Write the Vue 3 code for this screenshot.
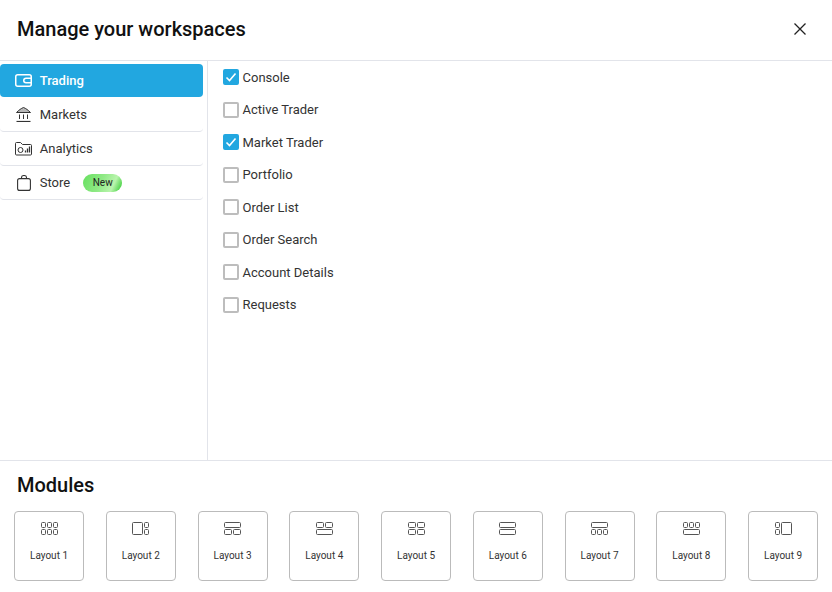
<script setup>
const navItems = [
  { name: 'Trading', icon: 'wallet', active: true },
  { name: 'Markets', icon: 'bank' },
  { name: 'Analytics', icon: 'folder' },
  { name: 'Store', icon: 'bag', badge: 'New' }
]
const options = [
  { name: 'Console', checked: true },
  { name: 'Active Trader', checked: false },
  { name: 'Market Trader', checked: true },
  { name: 'Portfolio', checked: false },
  { name: 'Order List', checked: false },
  { name: 'Order Search', checked: false },
  { name: 'Account Details', checked: false },
  { name: 'Requests', checked: false }
]
// Layout cells as [x, y, w, h] inside a 17x13 icon
const row1 = 0.5
const row2 = 7.5
const layouts = [
  [[0.5,row1,4,5],[6.5,row1,4,5],[12.5,row1,4,5],[0.5,row2,4,5],[6.5,row2,4,5],[12.5,row2,4,5]],
  [[0.5,0.5,10,12],[12.5,row1,4,5],[12.5,row2,4,5]],
  [[0.5,row1,16,5],[0.5,row2,7,5],[9.5,row2,7,5]],
  [[0.5,row1,7,5],[9.5,row1,7,5],[0.5,row2,16,5]],
  [[0.5,row1,7,5],[9.5,row1,7,5],[0.5,row2,7,5],[9.5,row2,7,5]],
  [[0.5,row1,16,5],[0.5,row2,16,5]],
  [[0.5,row1,16,5],[0.5,row2,4,5],[6.5,row2,4,5],[12.5,row2,4,5]],
  [[0.5,row1,4,5],[6.5,row1,4,5],[12.5,row1,4,5],[0.5,row2,16,5]],
  [[0.5,row1,4,5],[0.5,row2,4,5],[6.5,0.5,10,12]]
]
</script>

<template>
  <div class="dialog">
    <header class="head">
      <h1>Manage your workspaces</h1>
      <button class="close" aria-label="Close">
        <svg width="14" height="14" viewBox="0 0 14 14"><path d="M1.5 1.5l11 11M12.5 1.5l-11 11" stroke="#222" stroke-width="1.3" fill="none"/></svg>
      </button>
    </header>
    <div class="main">
      <nav class="side">
        <div v-for="n in navItems" :key="n.name" class="nav" :class="{ active: n.active }">
          <span class="nav-icon">
            <svg v-if="n.icon === 'wallet'" width="17" height="13" viewBox="0 0 17 13" fill="none" stroke="#fff" stroke-width="1.5">
              <rect x="0.75" y="0.75" width="15.5" height="11.5" rx="2"/>
              <path d="M16.25 4.25H11a2.25 2.25 0 0 0 0 4.5h5.25"/>
            </svg>
            <svg v-else-if="n.icon === 'bank'" width="15" height="15" viewBox="0 0 15 15" fill="none" stroke="#333" stroke-width="1">
              <path d="M0.5 5.5C3 3 5 1.5 7.5 0.5c2.5 1 4.5 2.5 7 5z" fill="#333" fill-opacity="0.35"/>
              <path d="M3.5 7.5v4.5M7.5 7.5v4.5M11.5 7.5v4.5"/>
              <path d="M0.5 14.5h14" stroke-width="1.2"/>
            </svg>
            <svg v-else-if="n.icon === 'folder'" width="17" height="14" viewBox="0 0 17 14" fill="none" stroke="#333" stroke-width="1">
              <path d="M0.5 12V1.5a1 1 0 0 1 1-1h4l2 2h8a1 1 0 0 1 1 1V12a1 1 0 0 1-1 1h-14a1 1 0 0 1-1-1z"/>
              <circle cx="5.5" cy="8" r="2.5"/>
              <path d="M10.5 10.5V8.5M12.5 10.5V6.5M14.5 10.5V4.5" stroke-width="1.3"/>
            </svg>
            <svg v-else width="14" height="16" viewBox="0 0 14 16" fill="none" stroke="#333" stroke-width="1.1">
              <rect x="0.6" y="3.6" width="12.8" height="11.8" rx="2"/>
              <path d="M4.5 3.6V2.5a2.5 2 0 0 1 5 0v1.1"/>
            </svg>
          </span>
          <span class="nav-label">{{ n.name }}</span>
          <span v-if="n.badge" class="badge">{{ n.badge }}</span>
        </div>
      </nav>
      <section class="options">
        <label v-for="o in options" :key="o.name" class="opt">
          <span class="box" :class="{ on: o.checked }">
            <svg v-if="o.checked" width="12" height="12" viewBox="0 0 12 12"><path d="M1.5 6.5l3 3 6-7" stroke="#fff" stroke-width="1.6" fill="none"/></svg>
          </span>
          <span>{{ o.name }}</span>
        </label>
      </section>
    </div>
    <footer class="modules">
      <h2>Modules</h2>
      <div class="cards">
        <div v-for="(cells, i) in layouts" :key="i" class="card">
          <svg width="17" height="13" viewBox="0 0 17 13" fill="none" stroke="#555" stroke-width="1">
            <rect v-for="(c, j) in cells" :key="j" :x="c[0]" :y="c[1]" :width="c[2]" :height="c[3]" rx="1"/>
          </svg>
          <span>Layout {{ i + 1 }}</span>
        </div>
      </div>
    </footer>
  </div>
</template>

<style>
html, body { margin: 0; background: #fff; }
</style>

<style scoped>
.dialog {
  width: 832px;
  height: 592px;
  display: flex;
  flex-direction: column;
  font-family: Roboto, "Liberation Sans", sans-serif;
  color: #333;
  background: #fff;
  overflow: hidden;
}
.head {
  height: 58px;
  flex: none;
  display: flex;
  align-items: center;
  justify-content: space-between;
  padding: 0 25px 2px 17px;
  border-bottom: 1px solid #e2e4ea;
}
h1 {
  margin: 0;
  font-size: 20px;
  font-weight: 500;
  color: #111;
}
.close {
  border: 0;
  background: none;
  padding: 0;
  display: flex;
}
.main {
  height: 399px;
  flex: none;
  display: flex;
  border-bottom: 1px solid #e2e4ea;
}
.side {
  width: 207px;
  box-sizing: content-box;
  flex: none;
  border-right: 1px solid #e2e4ea;
  padding-top: 3px;
}
.nav {
  width: 203px;
  height: 34px;
  display: flex;
  align-items: center;
  box-sizing: border-box;
  border-bottom: 1px solid #e2e4ea;
  border-radius: 0 0 4px 4px;
  font-size: 13px;
  color: #333;
}
.nav.active {
  height: 33px;
  margin-bottom: 1px;
  background: #22a7e0;
  color: #fff;
  font-weight: 500;
  border-bottom: 0;
  border-radius: 4px;
}
.nav-icon {
  width: 17px;
  margin-left: 15px;
  margin-right: 8px;
  display: flex;
  justify-content: center;
}
.nav-label {
  margin-left: -0.25px;
}
.badge {
  margin-left: 13px;
  width: 39px;
  height: 18px;
  border-radius: 9px;
  display: flex;
  align-items: center;
  justify-content: center;
  font-size: 10px;
  color: #222;
  background: linear-gradient(115deg, #66e05f 0%, #8fe985 45%, #b9f4ad 75%, #55d650 92%, #8fe985 100%);
}
.options {
  padding: 0 0 0 15px;
}
.opt {
  height: 32.5px;
  display: flex;
  align-items: center;
  font-size: 13px;
  color: #333;
}
.box {
  width: 16px;
  height: 16px;
  box-sizing: border-box;
  border: 2px solid #bdbdbd;
  border-radius: 2px;
  margin-right: 3.5px;
  display: flex;
  align-items: center;
  justify-content: center;
}
.box.on {
  background: #22a7e0;
  border-color: #22a7e0;
}
.modules {
  flex: 1;
  padding: 0 14px;
}
h2 {
  margin: 13px 0 0 3px;
  font-size: 20px;
  line-height: 23px;
  font-weight: 500;
  color: #111;
}
.cards {
  margin-top: 14px;
  display: flex;
  justify-content: space-between;
}
.card {
  width: 70px;
  height: 70px;
  box-sizing: border-box;
  border: 1px solid #bbb;
  border-radius: 4px;
  display: flex;
  flex-direction: column;
  align-items: center;
  padding-top: 10px;
  font-size: 10px;
  color: #333;
}
.card svg {
  display: block;
}
.card span {
  margin-top: 15px;
}
</style>
